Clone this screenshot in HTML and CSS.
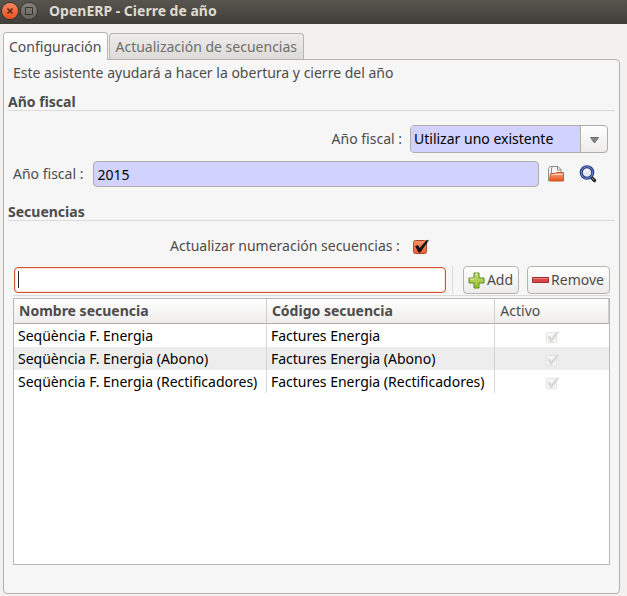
FILE: index.html
```html
<!DOCTYPE html>
<html lang="es">
<head>
<meta charset="utf-8">
<meta name="viewport" content="width=device-width, initial-scale=1">
<title>OpenERP - Cierre de año</title>
<link rel="stylesheet" href="styles.css">
</head>
<body>
<svg class="defs" aria-hidden="true">
  <defs>
    <linearGradient id="orange" x1="0" y1="0" x2="0" y2="1"><stop offset="0" stop-color="#f9936b"/><stop offset="1" stop-color="#ec5f35"/></linearGradient>
    <linearGradient id="folder" x1="0" y1="0" x2="0" y2="1"><stop offset="0" stop-color="#f7ac86"/><stop offset="1" stop-color="#e5501a"/></linearGradient>
    <linearGradient id="green" x1="0" y1="0" x2="0" y2="1"><stop offset="0" stop-color="#c8e07a"/><stop offset="1" stop-color="#94bd2c"/></linearGradient>
    <symbol id="tick" viewBox="0 0 17 17"><path d="M3.5 8.2 6 7.6l1.6 3L14.6 2.4l1.8.1L8.2 14.2 6.6 14z"/></symbol>
  </defs>
</svg>
<header class="titlebar">
  <button class="wm close" type="button" aria-label="Cerrar">
    <svg viewBox="0 0 16 16"><path d="M5.5 5.5l5 5m0-5l-5 5"/></svg>
  </button>
  <button class="wm" type="button" aria-label="Maximizar">
    <svg viewBox="0 0 16 16"><path d="M4.500 4.500h7v7h-7z"/></svg>
  </button>
  <h1>OpenERP - Cierre de año</h1>
</header>
<main class="notebook">
  <div class="tabs" role="tablist">
    <button class="tab active" type="button" role="tab" aria-selected="true">Configuración</button>
    <button class="tab" type="button" role="tab" aria-selected="false">Actualización de secuencias</button>
  </div>
  <section class="panel" role="tabpanel">
    <p class="intro">Este asistente ayudará a hacer la obertura y cierre del año</p>

    <h2>Año fiscal</h2>
    <div class="row mode">
      <label for="mode">Año fiscal :</label>
      <div class="combo">
        <select id="mode"><option>Utilizar uno existente</option></select>
        <svg class="arrow" viewBox="0 0 9 7" aria-hidden="true"><path d="M.5 .5h8L4.5 6z"/></svg>
      </div>
    </div>
    <div class="row year">
      <label for="year">Año fiscal :</label>
      <input class="field" id="year" type="text" value="2015">
      <button class="icon" type="button" aria-label="Abrir">
        <svg viewBox="0 0 18 18">
          <path d="M1.500 16V3.500L3 1.500h3.500V5" fill="#f4f4f2" stroke="#8c8c88"/>
          <path d="M4.500 8V3L6 1.500h5l3 3V8" fill="#f4f4f2" stroke="#8c8c88"/>
          <path d="M10.500 2v3H14" fill="none" stroke="#8c8c88"/>
          <path d="M3.500 8.500H8L9 7.500h7.500v8.500H2.500z" fill="url(#folder)" stroke="#d0561f"/>
          <path d="M4 9.500h12" stroke="#fbd0b8"/>
        </svg>
      </button>
      <button class="icon" type="button" aria-label="Buscar">
        <svg viewBox="0 0 18 18">
          <path d="M12.500 12.500l3 3" stroke="#222" stroke-width="3.200" stroke-linecap="round"/>
          <circle cx="8" cy="7.500" r="5.800" fill="#e6e9ec" stroke="#1d2f78" stroke-width="3"/>
          <circle cx="8" cy="7.500" r="5.800" fill="none" stroke="#6580cc" stroke-width="1.200"/>
          <path d="M5.500 7.500a3 3 0 0 1 3-2.500" fill="none" stroke="#fff" stroke-width="1.500"/>
          <path d="M13 13l2 2" stroke="#999"/>
        </svg>
      </button>
    </div>

    <h2>Secuencias</h2>
    <div class="row update">
      <label for="update">Actualizar numeración secuencias :</label>
      <span class="check">
        <input id="update" type="checkbox" checked>
        <svg viewBox="0 0 17 17" aria-hidden="true">
          <rect x="1.500" y="2.500" width="13" height="13" rx="2" fill="url(#orange)" stroke="#a9492a"/>
          <use href="#tick" fill="#111" stroke="#111" stroke-width=".6"/>
        </svg>
      </span>
    </div>
    <div class="toolbar">
      <div class="search"><input class="field" type="text" aria-label="Buscar secuencia"></div>
      <span class="separator"></span>
      <button class="action" type="button">
        <svg viewBox="0 0 17 17" aria-hidden="true"><path d="M6 1h5v5h5v5h-5v5H6v-5H1V6h5z" fill="url(#green)" stroke="#5f8a1c"/><path d="M7 2h3M2 7h4.500" stroke="#e0efac"/></svg>
        Add
      </button>
      <button class="action" type="button">
        <svg viewBox="0 0 17 17" aria-hidden="true"><path d="M.5 5.500h16v5H.5z" fill="#d8484a" stroke="#a8282c"/><path d="M1 6.500h15" stroke="#ea7f7f"/></svg>
        Remove
      </button>
    </div>
    <div class="list">
      <table>
        <colgroup><col class="name"><col class="code"><col></colgroup>
        <thead>
          <tr><th scope="col">Nombre secuencia</th><th scope="col">Código secuencia</th><th scope="col" class="plain">Activo</th></tr>
        </thead>
        <tbody>
          <tr>
            <td>Seqüència F. Energia</td><td>Factures Energia</td>
            <td><span class="check off"><input type="checkbox" checked disabled aria-label="Activo"><svg viewBox="0 0 17 17" aria-hidden="true"><rect x="1.500" y="3" width="12.500" height="12.500" rx="2"/><use href="#tick"/></svg></span></td>
          </tr>
          <tr>
            <td>Seqüència F. Energia (Abono)</td><td>Factures Energia (Abono)</td>
            <td><span class="check off"><input type="checkbox" checked disabled aria-label="Activo"><svg viewBox="0 0 17 17" aria-hidden="true"><rect x="1.500" y="3" width="12.500" height="12.500" rx="2"/><use href="#tick"/></svg></span></td>
          </tr>
          <tr>
            <td>Seqüència F. Energia (Rectificadores)</td><td>Factures Energia (Rectificadores)</td>
            <td><span class="check off"><input type="checkbox" checked disabled aria-label="Activo"><svg viewBox="0 0 17 17" aria-hidden="true"><rect x="1.500" y="3" width="12.500" height="12.500" rx="2"/><use href="#tick"/></svg></span></td>
          </tr>
        </tbody>
      </table>
    </div>
  </section>
</main>
</body>
</html>
```
FILE: styles.css
```css
* { box-sizing: border-box; }

body {
  margin: 0;
  min-height: 100vh;
  display: flex;
  flex-direction: column;
  background: #f2f1f0;
  color: #4c4c4c;
  font: 14px/20px "Noto Sans", sans-serif;
}

h1, h2, p { margin: 0; }
button, input, select { font: inherit; color: inherit; margin: 0; }
svg { display: block; }
.defs { position: absolute; width: 0; height: 0; }

.titlebar {
  display: flex;
  align-items: center;
  gap: 3px;
  height: 24px;
  padding: 0 2px 2px;
  background: linear-gradient(#58554e, #3e3d38);
  color: #dfdbd2;
}
.titlebar h1 { margin-left: 9px; font-size: 14px; line-height: 20px; }
.wm {
  width: 16px;
  height: 16px;
  padding: 0;
  border: 0;
  border-radius: 50%;
  background: linear-gradient(#85827b, #65635c);
  box-shadow: 0 0 0 1px #35342f;
}
.wm svg { width: 16px; height: 16px; fill: none; stroke: #35342f; }
.wm.close { background: linear-gradient(#f58560, #e8511f); }
.wm.close svg { stroke: #55200f; stroke-width: 1.5; }

.notebook {
  flex: 1;
  display: flex;
  flex-direction: column;
  padding: 8px 7px 2px 3px;
}
.tabs { display: flex; align-items: flex-end; gap: 1px; }
.tab {
  height: 26px;
  padding: 0 6px 0 5px;
  border: 1px solid #b8b5b0;
  border-bottom: 0;
  border-radius: 4px 4px 0 0;
  background: linear-gradient(#eeedec, #dddbd9);
  color: #6e6e6c;
  line-height: 24px;
}
.tab.active {
  z-index: 1;
  height: 28px;
  margin-bottom: -1px;
  background: linear-gradient(#fff, #f6f6f6);
  color: #4c4c4c;
}
.panel {
  flex: 1;
  display: flex;
  flex-direction: column;
  padding: 3px 4px 28px;
  border: 1px solid #b5b2ad;
  border-radius: 0 4px 4px 4px;
  background: #f6f6f6;
}
.intro { padding: 0 5px; }
h2 {
  margin-top: 10px;
  border-bottom: 1px solid #dcdbda;
  font-size: 14px;
  line-height: 17px;
}
.row { display: flex; align-items: center; padding: 0 5px; }

.mode { justify-content: flex-end; gap: 8px; margin-top: 14px; padding-right: 7px; }
.combo {
  position: relative;
  width: 198px;
  height: 28px;
  border: 1px solid #b0ada8;
  border-radius: 4px;
  background: linear-gradient(#fff, #ecebea);
}
.combo select {
  appearance: none;
  width: 100%;
  height: 100%;
  padding: 0 30px 0 3px;
  border: 0;
  border-radius: 3px;
  background: linear-gradient(to left, transparent 26px, #b0ada8 26px, #b0ada8 27px, #d2d2ff 27px);
  color: #000;
}
.arrow {
  position: absolute;
  right: 8px;
  top: 11px;
  width: 9px;
  height: 7px;
  fill: #888;
  stroke: #6c6c6c;
  pointer-events: none;
}

.year { gap: 8px; margin-top: 8px; padding-right: 18px; }
.year label { margin-right: 2px; }
.field {
  flex: 1;
  min-width: 0;
  height: 26px;
  padding: 0 3px;
  border: 1px solid #b0ada8;
  border-radius: 4px;
  background: #d2d2ff;
  color: #000;
}
.icon { width: 18px; height: 18px; padding: 0; border: 0; background: none; }
.icon svg { width: 18px; height: 18px; }
.icon + .icon { margin-left: 6px; }
.year + h2 { margin-top: 16px; }

.update { gap: 12px; margin-top: 15px; padding-left: 162px; }
.check { display: inline-grid; vertical-align: top; }
.check > * { grid-area: 1 / 1; width: 17px; height: 17px; margin: 0; }
.check input { opacity: 0; }
.check svg { pointer-events: none; }
.check.off { vertical-align: middle; }
.check.off > * { width: 14px; height: 14px; }
.check.off rect { fill: #f6f6f6; stroke: #dededc; }
.check.off use { fill: #d8d8d6; stroke: #d8d8d6; }

.toolbar {
  display: flex;
  align-items: center;
  gap: 8px;
  margin: 10px 5px 0;
  padding-bottom: 1px;
  border-bottom: 1px solid #dcdbda;
}
.search { position: relative; display: flex; flex: 1; padding-left: 1px; }
.search .field { border-color: #d4532a; background: #fff; box-shadow: inset 0 0 0 1px #f7e4dc; }
.search::after {
  content: "";
  position: absolute;
  left: 5px;
  top: 4px;
  width: 1px;
  height: 17px;
  background: #222;
}
.separator { width: 1px; height: 28px; margin-left: -2px; background: #dcdbda; }
.separator + .action { margin-left: 2px; }
.action {
  display: flex;
  align-items: center;
  gap: 2px;
  height: 28px;
  padding: 0 5px 0 4px;
  border: 1px solid #b8b5b0;
  border-radius: 4px;
  background: linear-gradient(#fff, #ecebea);
}
.action svg { width: 17px; height: 17px; }

.list {
  flex: 1;
  margin: 2px 5px 0;
  border: 1px solid #b8b8b6;
  background: #fff;
}
table { width: 100%; border-collapse: separate; border-spacing: 0; table-layout: fixed; }
.name { width: 42.5%; }
.code { width: 38.4%; }
th, td { padding: 0 4px; text-align: left; white-space: nowrap; }
th {
  height: 25px;
  padding: 0 5px;
  border-right: 1px solid #d0cfcd;
  border-bottom: 1px solid #b0adab;
  background: linear-gradient(#fff, #eeedec);
}
th.plain { font-weight: 400; }
td { height: 23px; border-right: 1px solid #d6d5d4; color: #000; }
td:last-child { border-right: 0; text-align: center; }
tbody tr:nth-child(even) { background: #ededed; }
```
